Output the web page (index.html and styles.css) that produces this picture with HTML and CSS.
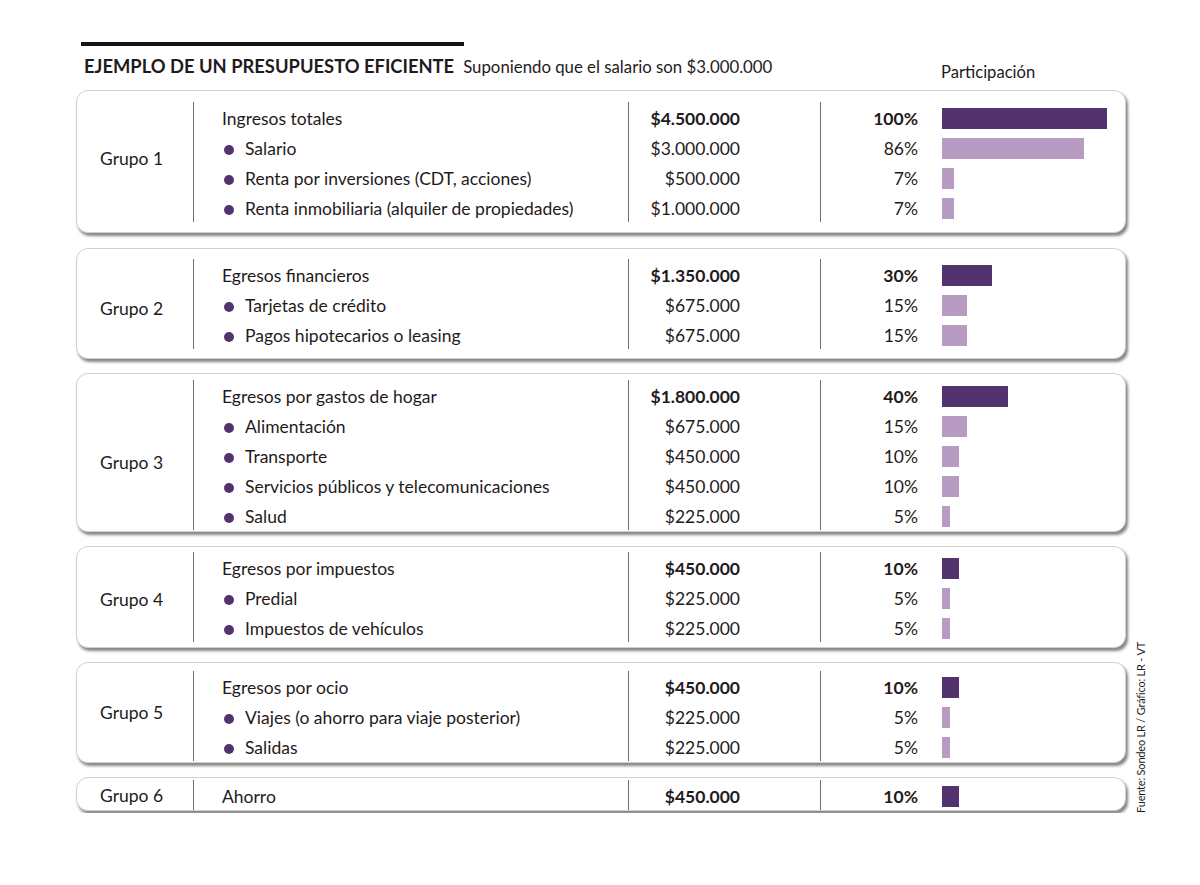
FILE: index.html
```html
<!DOCTYPE html>
<html lang="es">
<head>
<meta charset="utf-8">
<title>Ejemplo de un presupuesto eficiente</title>
<link rel="stylesheet" href="styles.css">
</head>
<body>
<div class="page">
  <div class="rule"></div>
  <header class="header">
    <div class="title-wrap">
      <h1 class="title">EJEMPLO DE UN PRESUPUESTO EFICIENTE</h1>
      <span class="subtitle">Suponiendo que el salario son $3.000.000</span>
    </div>
    <div class="col-head">Participación</div>
  </header>

  <div class="main">
    <div class="cards">
      <section class="card c1">
        <div class="grp">Grupo 1</div>
        <div class="rows">
          <div class="row head"><div class="lbl">Ingresos totales</div><div class="amt">$4.500.000</div><div class="pct"><span class="num">100%</span><span class="track"><span class="bar dark" style="width:100%"></span></span></div></div>
          <div class="row"><div class="lbl"><span class="dot"></span>Salario</div><div class="amt">$3.000.000</div><div class="pct"><span class="num">86%</span><span class="track"><span class="bar" style="width:86%"></span></span></div></div>
          <div class="row"><div class="lbl"><span class="dot"></span>Renta por inversiones (CDT, acciones)</div><div class="amt">$500.000</div><div class="pct"><span class="num">7%</span><span class="track"><span class="bar" style="width:7%"></span></span></div></div>
          <div class="row"><div class="lbl"><span class="dot"></span>Renta inmobiliaria (alquiler de propiedades)</div><div class="amt">$1.000.000</div><div class="pct"><span class="num">7%</span><span class="track"><span class="bar" style="width:7%"></span></span></div></div>
        </div>
      </section>

      <section class="card c2">
        <div class="grp">Grupo 2</div>
        <div class="rows">
          <div class="row head"><div class="lbl">Egresos financieros</div><div class="amt">$1.350.000</div><div class="pct"><span class="num">30%</span><span class="track"><span class="bar dark" style="width:30%"></span></span></div></div>
          <div class="row"><div class="lbl"><span class="dot"></span>Tarjetas de crédito</div><div class="amt">$675.000</div><div class="pct"><span class="num">15%</span><span class="track"><span class="bar" style="width:15%"></span></span></div></div>
          <div class="row"><div class="lbl"><span class="dot"></span>Pagos hipotecarios o leasing</div><div class="amt">$675.000</div><div class="pct"><span class="num">15%</span><span class="track"><span class="bar" style="width:15%"></span></span></div></div>
        </div>
      </section>

      <section class="card c3">
        <div class="grp">Grupo 3</div>
        <div class="rows">
          <div class="row head"><div class="lbl">Egresos por gastos de hogar</div><div class="amt">$1.800.000</div><div class="pct"><span class="num">40%</span><span class="track"><span class="bar dark" style="width:40%"></span></span></div></div>
          <div class="row"><div class="lbl"><span class="dot"></span>Alimentación</div><div class="amt">$675.000</div><div class="pct"><span class="num">15%</span><span class="track"><span class="bar" style="width:15%"></span></span></div></div>
          <div class="row"><div class="lbl"><span class="dot"></span>Transporte</div><div class="amt">$450.000</div><div class="pct"><span class="num">10%</span><span class="track"><span class="bar" style="width:10%"></span></span></div></div>
          <div class="row"><div class="lbl"><span class="dot"></span>Servicios públicos y telecomunicaciones</div><div class="amt">$450.000</div><div class="pct"><span class="num">10%</span><span class="track"><span class="bar" style="width:10%"></span></span></div></div>
          <div class="row"><div class="lbl"><span class="dot"></span>Salud</div><div class="amt">$225.000</div><div class="pct"><span class="num">5%</span><span class="track"><span class="bar" style="width:5%"></span></span></div></div>
        </div>
      </section>

      <section class="card c4">
        <div class="grp">Grupo 4</div>
        <div class="rows">
          <div class="row head"><div class="lbl">Egresos por impuestos</div><div class="amt">$450.000</div><div class="pct"><span class="num">10%</span><span class="track"><span class="bar dark" style="width:10%"></span></span></div></div>
          <div class="row"><div class="lbl"><span class="dot"></span>Predial</div><div class="amt">$225.000</div><div class="pct"><span class="num">5%</span><span class="track"><span class="bar" style="width:5%"></span></span></div></div>
          <div class="row"><div class="lbl"><span class="dot"></span>Impuestos de vehículos</div><div class="amt">$225.000</div><div class="pct"><span class="num">5%</span><span class="track"><span class="bar" style="width:5%"></span></span></div></div>
        </div>
      </section>

      <section class="card c5">
        <div class="grp">Grupo 5</div>
        <div class="rows">
          <div class="row head"><div class="lbl">Egresos por ocio</div><div class="amt">$450.000</div><div class="pct"><span class="num">10%</span><span class="track"><span class="bar dark" style="width:10%"></span></span></div></div>
          <div class="row"><div class="lbl"><span class="dot"></span>Viajes (o ahorro para viaje posterior)</div><div class="amt">$225.000</div><div class="pct"><span class="num">5%</span><span class="track"><span class="bar" style="width:5%"></span></span></div></div>
          <div class="row"><div class="lbl"><span class="dot"></span>Salidas</div><div class="amt">$225.000</div><div class="pct"><span class="num">5%</span><span class="track"><span class="bar" style="width:5%"></span></span></div></div>
        </div>
      </section>

      <section class="card c6">
        <div class="grp">Grupo 6</div>
        <div class="rows">
          <div class="row head"><div class="lbl">Ahorro</div><div class="amt">$450.000</div><div class="pct"><span class="num">10%</span><span class="track"><span class="bar dark" style="width:10%"></span></span></div></div>
        </div>
      </section>
    </div>
    <div class="source">Fuente: Sondeo LR / Gráfico: LR - VT</div>
  </div>
</div>
</body>
</html>
```

FILE: styles.css
```css
* { box-sizing: border-box; }

html, body {
  margin: 0;
  padding: 0;
  background: #ffffff;
}

body {
  font-family: "Lato", "Open Sans", sans-serif;
  color: #1f1b1c;
  font-size: 17.5px;
}

.page {
  padding: 42px 0 0 76px;
}

.rule {
  width: 383px;
  height: 4px;
  margin-left: 5px;
  background: #151515;
}

.header {
  display: grid;
  grid-template-columns: 865px 1fr;
  width: 1050px;
  height: 44px;
}

.title-wrap {
  display: flex;
  align-items: baseline;
  padding-left: 8px;
  padding-top: 9px;
}

.title {
  margin: 0;
  font-size: 18.35px;
  font-weight: 700;
  line-height: 22px;
}

.subtitle {
  margin-left: 9px;
  font-size: 16.8px;
  line-height: 22px;
}

.col-head {
  padding-top: 15px;
  font-size: 16.6px;
  line-height: 22px;
}

.main {
  display: flex;
  align-items: flex-end;
  gap: 9px;
}

.cards {
  width: 1050px;
  display: flex;
  flex-direction: column;
  gap: 14px;
  padding-bottom: 2px;
}

.card {
  display: flex;
  background: #ffffff;
  border: 1px solid #d0d0d0;
  border-radius: 12px;
  box-shadow: 2px 3px 3px rgba(0, 0, 0, 0.48);
}

.c1 { padding: 11px 0 10px; }
.c2 { padding: 10px 0 9px; margin-top: 1px; }
.c3 { padding: 6px 0 1px; }
.c4 { padding: 5px 0 5px; }
.c5 { padding: 8px 0 1px; }
.c6 { padding: 2px 0 0; }

.grp {
  width: 117px;
  flex: none;
  display: flex;
  align-items: center;
  padding-left: 23px;
  border-right: 1px solid #6e6e6e;
}

.c1 .grp { padding-bottom: 8px; }
.c2 .grp { padding-top: 8px; }
.c3 .grp { padding-top: 14px; }
.c4 .grp { padding-top: 4px; }
.c5 .grp { padding-bottom: 8px; }

.rows {
  flex: 1;
  display: flex;
  flex-direction: column;
}

.row {
  display: flex;
  height: 30px;
  padding-top: 3px;
  line-height: 27px;
}

.lbl {
  width: 434px;
  flex: none;
  display: flex;
  align-items: center;
  padding-left: 28px;
  white-space: nowrap;
}

.dot {
  width: 10px;
  height: 10px;
  border-radius: 50%;
  background: #52336e;
  margin-left: 2px;
  margin-right: 11px;
  margin-top: 3px;
  flex: none;
}

.amt {
  width: 192px;
  flex: none;
  text-align: right;
  padding-right: 80px;
  border-left: 1px solid #6e6e6e;
  margin-top: -3px;
  padding-top: 3px;
}

.pct {
  flex: 1;
  display: flex;
  align-items: center;
  border-left: 1px solid #6e6e6e;
  margin-top: -3px;
  padding-top: 3px;
}

.num {
  width: 97px;
  text-align: right;
  flex: none;
}

.track {
  width: 165px;
  margin-left: 24px;
  height: 21px;
  display: flex;
}

.bar {
  display: block;
  height: 21px;
  background: #b89bc2;
}

.bar.dark {
  background: #52336e;
}

.head .amt,
.head .num {
  font-weight: 700;
}

.source {
  writing-mode: vertical-rl;
  transform: rotate(180deg);
  font-size: 11px;
  letter-spacing: -0.2px;
  line-height: 12px;
  white-space: nowrap;
  color: #1f1b1c;
}
```
